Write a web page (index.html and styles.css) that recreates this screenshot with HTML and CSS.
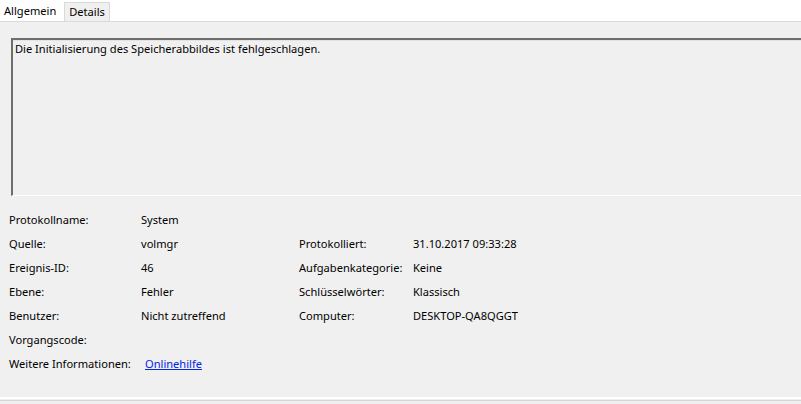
FILE: index.html
```html
<!DOCTYPE html>
<html lang="de">
<head>
  <meta charset="UTF-8" />
  <title>Ereignis 46, volmgr</title>
  <link rel="stylesheet" href="styles.css">
</head>
<body>
  <div class="tabs">
    <div class="tab active">Allgemein</div>
    <div class="tab">Details</div>
  </div>

  <div class="page">
    <div class="message">Die Initialisierung des Speicherabbildes ist fehlgeschlagen.</div>

    <div class="props">
      <span>Protokollname:</span><span>System</span><span></span><span></span>
      <span>Quelle:</span><span>volmgr</span><span>Protokolliert:</span><span>31.10.2017 09:33:28</span>
      <span>Ereignis-ID:</span><span>46</span><span>Aufgabenkategorie:</span><span>Keine</span>
      <span>Ebene:</span><span>Fehler</span><span>Schlüsselwörter:</span><span>Klassisch</span>
      <span>Benutzer:</span><span>Nicht zutreffend</span><span>Computer:</span><span>DESKTOP-QA8QGGT</span>
      <span>Vorgangscode:</span><span></span><span></span><span></span>
      <span>Weitere Informationen:</span><span><a class="link" href="#">Onlinehilfe</a></span><span></span><span></span>
    </div>
  </div>

  <div class="footer"></div>
</body>
</html>
```

FILE: styles.css
```css
body { margin: 0; background: #f0f0f0; font-family: "Noto Sans", "Open Sans", sans-serif; font-size: 11.1px; color: #000; height: 404px; overflow: hidden; }
.tabs { display: flex; align-items: flex-start; height: 21px; background: #fff; border-bottom: 1px solid #dadada; }
.tab { height: 18px; line-height: 18px; margin-top: 2px; padding: 0 4px; background: #f0f0f0; border: 1px solid #d9d9d9; border-bottom: none; }
.tab.active { height: 21px; line-height: 21px; margin-top: 0; padding: 0 8px 0 4px; background: #fff; border: none; }
.page { padding: 16px 0 0 11px; }
.message { height: 154px; padding: 1px 0 0 2px; border-top: 2px solid #6d6d6d; border-left: 2px solid #6d6d6d; border-bottom: 1px solid #fff; box-shadow: 0 1px 0 #e3e3e3 inset; }
.props { display: grid; grid-template-columns: 132px 158px 114px auto; grid-auto-rows: 24px; align-items: center; margin: 11px 0 0 -2px; }
.link { margin-left: 4px; color: #0026e6; }
.footer { margin-top: 22px; height: 1px; border-top: 2px solid #fff; border-bottom: 1px solid #d6d6d6; }
```
